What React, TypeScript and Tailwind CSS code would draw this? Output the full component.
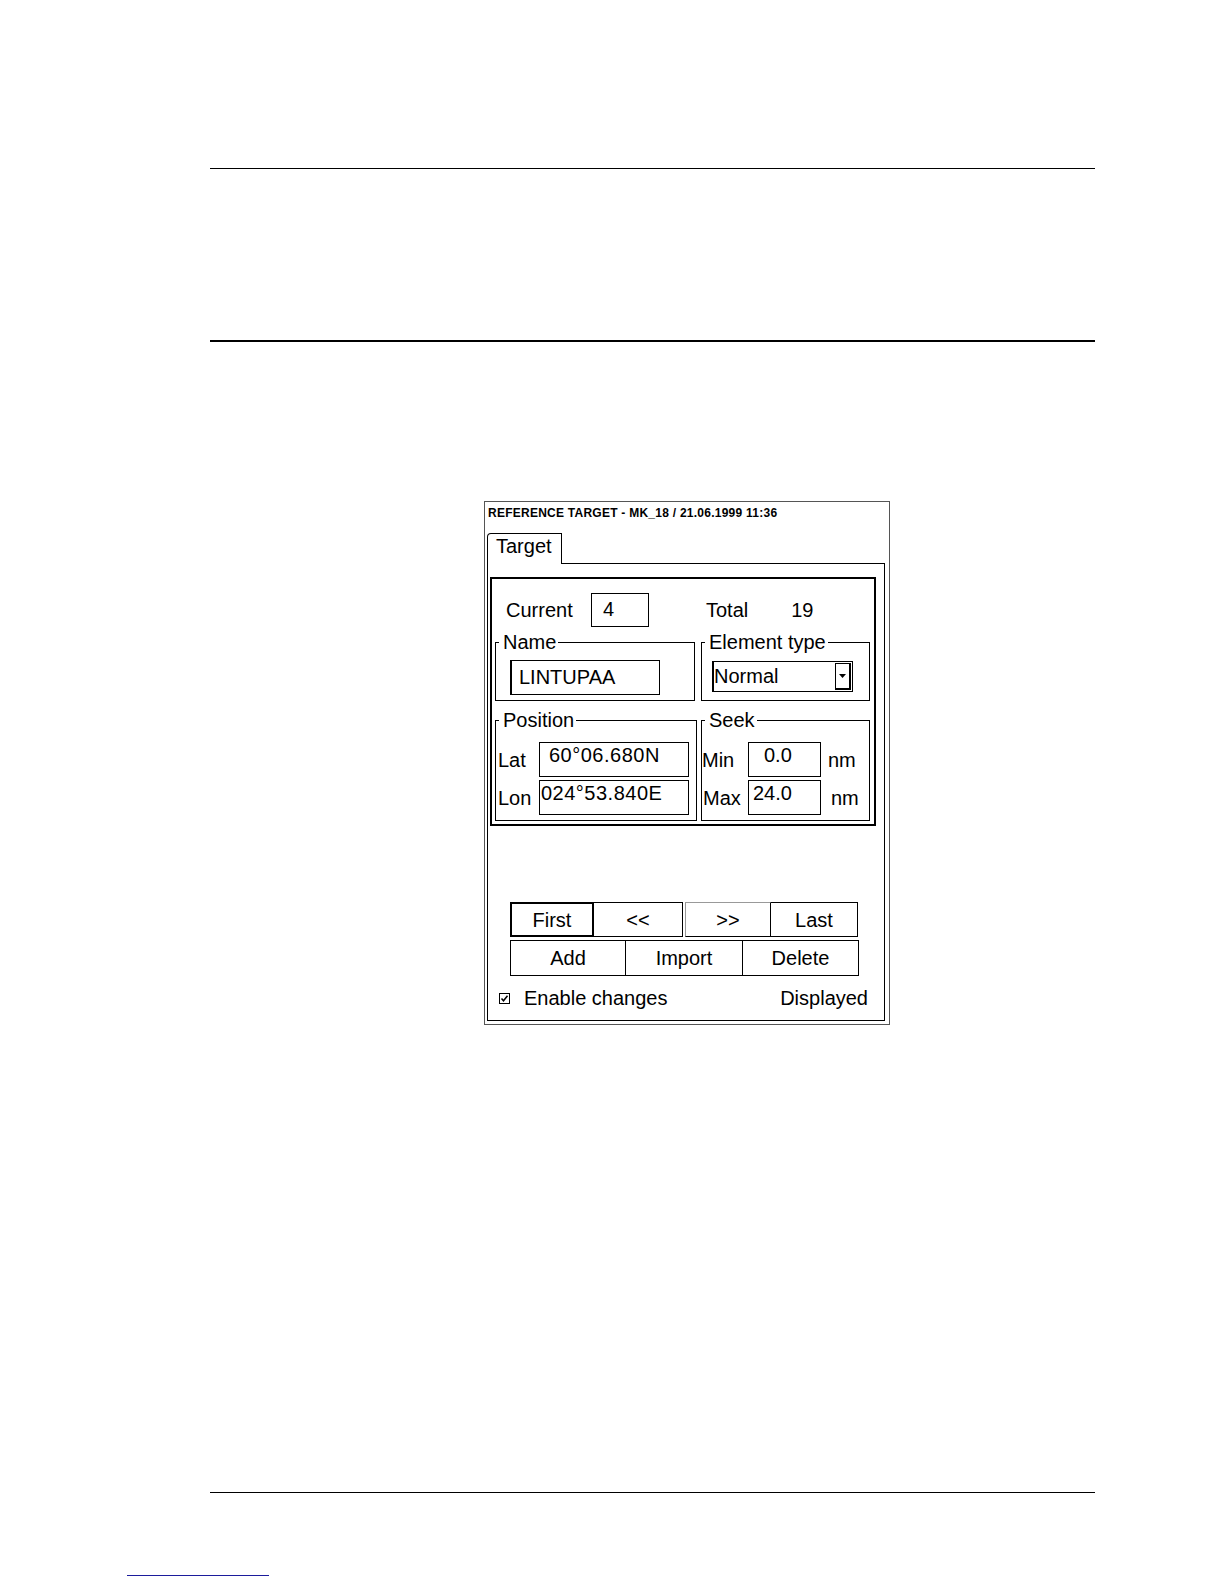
import React from "react";

function GroupBox({
  label,
  width,
  children,
}: {
  label: string;
  width: string;
  children: React.ReactNode;
}) {
  return (
    <fieldset className={`border border-black ${width}`}>
      <legend className="ml-[3px] pl-[4px] pr-[2px] text-[20px] leading-[20px]">{label}</legend>
      {children}
    </fieldset>
  );
}

function Field({
  value,
  className,
}: {
  value: string;
  className: string;
}) {
  return (
    <div className={`border border-black text-[20px] leading-[24px] whitespace-nowrap ${className}`}>
      {value}
    </div>
  );
}

function CheckBox() {
  return (
    <svg width="11" height="11" viewBox="0 0 11 11" className="shrink-0">
      <rect x="0.5" y="0.5" width="10" height="10" fill="white" stroke="black" />
      <path d="M2.5 5.5 L4.5 7.8 L8.5 2.8" fill="none" stroke="black" strokeWidth="1.5" />
    </svg>
  );
}

function TargetDialog() {
  return (
    <div className="mt-[159px] ml-[484px] flex h-[524px] w-[406px] flex-col border border-[#555]">
      <div className="h-[31px] pl-[3px] pt-[3px] text-[12px] font-bold leading-[16px] tracking-[0.25px]">
        REFERENCE TARGET - MK_18 / 21.06.1999 11:36
      </div>

      <div className="ml-[2px] flex w-[398px] flex-col">
        {/* tab strip */}
        <div className="flex h-[31px]">
          <div className="w-[75px] rounded-tl-[4px] border-l border-r border-t border-black pl-[8px] text-[20px] leading-[24px]">
            Target
          </div>
          <div className="flex-1 border-b border-black" />
        </div>

        {/* tab body */}
        <div className="flex h-[457px] flex-col border-b border-l border-r border-black">
          <div className="ml-[2px] mt-[13px] flex w-[386px] flex-col border-2 border-black pb-[3px] pl-[3px] pr-[2px]">
            <div className="mt-[14px] flex h-[34px] items-center text-[20px] leading-[24px]">
              <span className="ml-[11px] w-[85px]">Current</span>
              <Field value="4" className="h-[34px] w-[58px] self-start pl-[11px] pt-[3px]" />
              <span className="ml-[57px]">Total</span>
              <span className="ml-[43px]">19</span>
            </div>

            <div className="mt-[5px] flex gap-[6px]">
              <GroupBox label="Name" width="w-[200px]">
                <Field
                  value="LINTUPAA"
                  className="mb-[5px] ml-[14px] mt-[8px] h-[35px] w-[150px] border-l-2 pl-[7px] pt-[4px]"
                />
              </GroupBox>
              <GroupBox label="Element type" width="w-[169px]">
                <div className="ml-[10px] mt-[9px] flex h-[31px] w-[141px] border border-l-2 border-black">
                  <span className="flex-1 pt-[2px] text-[20px] leading-[24px]">Normal</span>
                  <div className="my-[1px] mr-[1px] flex w-[16px] items-center justify-center border border-b-2 border-r-2 border-black">
                    <svg width="7" height="4" viewBox="0 0 7 4">
                      <polygon points="0,0 7,0 3.5,4" fill="black" />
                    </svg>
                  </div>
                </div>
              </GroupBox>
            </div>

            <div className="mt-[9px] flex gap-[4px]">
              <GroupBox label="Position" width="w-[202px]">
                <div className="mt-[12px] flex h-[35px] items-center text-[20px] leading-[24px]">
                  <span className="w-[43px] pl-[2px]">Lat</span>
                  <Field value="60°06.680N" className="h-[35px] w-[150px] self-start pl-[9px] tracking-[0.5px]" />
                </div>
                <div className="mb-[5px] mt-[3px] flex h-[35px] items-center text-[20px] leading-[24px]">
                  <span className="w-[43px] pl-[2px]">Lon</span>
                  <Field value="024°53.840E" className="h-[35px] w-[150px] self-start pl-[1px] tracking-[0.5px]" />
                </div>
              </GroupBox>
              <GroupBox label="Seek" width="w-[169px]">
                <div className="mt-[12px] flex h-[35px] items-center text-[20px] leading-[24px]">
                  <span className="w-[46px]">Min</span>
                  <Field value="0.0" className="h-[35px] w-[73px] self-start pl-[15px]" />
                  <span className="ml-[7px]">nm</span>
                </div>
                <div className="mb-[5px] mt-[3px] flex h-[35px] items-center text-[20px] leading-[24px]">
                  <span className="w-[46px] pl-[1px]">Max</span>
                  <Field value="24.0" className="h-[35px] w-[73px] self-start pl-[4px]" />
                  <span className="ml-[10px]">nm</span>
                </div>
              </GroupBox>
            </div>
          </div>

          {/* navigation buttons */}
          <div className="ml-[22px] mt-[76px] flex h-[35px] text-[20px] leading-[24px]">
            <div className="flex w-[84px] items-center justify-center border-2 border-black">First</div>
            <div className="flex w-[89px] items-center justify-center border-b border-r border-t border-black">&lt;&lt;</div>
            <div className="ml-[2px] flex w-[86px] items-center justify-center border border-b-black border-l-[#999] border-r-black border-t-[#999]">
              &gt;&gt;
            </div>
            <div className="flex w-[87px] items-center justify-center border-b border-r border-t border-black">Last</div>
          </div>
          <div className="ml-[22px] mt-[3px] flex h-[36px] text-[20px] leading-[24px]">
            <div className="flex w-[116px] items-center justify-center border border-black">Add</div>
            <div className="flex w-[117px] items-center justify-center border-b border-r border-t border-black">Import</div>
            <div className="flex w-[116px] items-center justify-center border-b border-r border-t border-black">Delete</div>
          </div>

          <div className="ml-[11px] mr-[16px] mt-[10px] flex h-[24px] items-center text-[20px] leading-[24px]">
            <CheckBox />
            <span className="ml-[14px] flex-1">Enable changes</span>
            <span>Displayed</span>
          </div>
        </div>
      </div>
    </div>
  );
}

export default function App() {
  return (
    <div className="flex h-[1584px] w-[1224px] flex-col bg-white font-['Liberation_Sans',Arial,sans-serif] text-black">
      <div className="ml-[210px] mt-[168px] h-px w-[885px] bg-black" />
      <div className="ml-[210px] mt-[171px] h-[2px] w-[885px] bg-black" />
      <TargetDialog />
      <div className="ml-[210px] mt-[467px] h-px w-[885px] bg-black" />
      <div className="ml-[127px] mt-[82px] h-px w-[142px] bg-[#1c1c9c]" />
    </div>
  );
}
